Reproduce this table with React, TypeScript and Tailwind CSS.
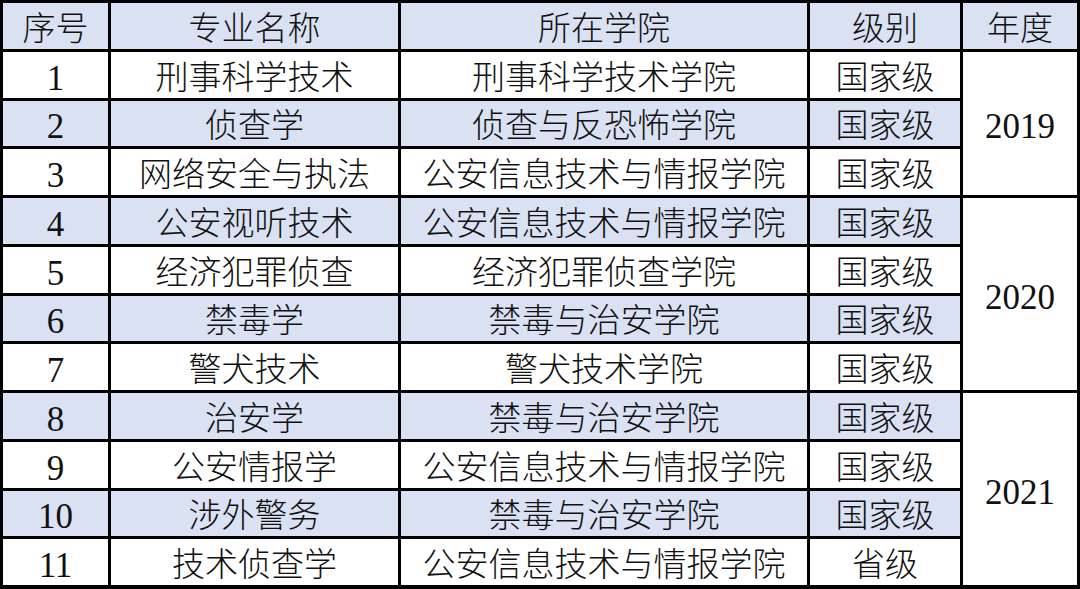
import React from "react";

type Row = { n: number; major: string; college: string; level: string };

const rows: Row[] = [
  { n: 1, major: "刑事科学技术", college: "刑事科学技术学院", level: "国家级" },
  { n: 2, major: "侦查学", college: "侦查与反恐怖学院", level: "国家级" },
  { n: 3, major: "网络安全与执法", college: "公安信息技术与情报学院", level: "国家级" },
  { n: 4, major: "公安视听技术", college: "公安信息技术与情报学院", level: "国家级" },
  { n: 5, major: "经济犯罪侦查", college: "经济犯罪侦查学院", level: "国家级" },
  { n: 6, major: "禁毒学", college: "禁毒与治安学院", level: "国家级" },
  { n: 7, major: "警犬技术", college: "警犬技术学院", level: "国家级" },
  { n: 8, major: "治安学", college: "禁毒与治安学院", level: "国家级" },
  { n: 9, major: "公安情报学", college: "公安信息技术与情报学院", level: "国家级" },
  { n: 10, major: "涉外警务", college: "禁毒与治安学院", level: "国家级" },
  { n: 11, major: "技术侦查学", college: "公安信息技术与情报学院", level: "省级" },
];

const years: Record<number, { year: string; span: string }> = {
  1: { year: "2019", span: "row-span-3" },
  4: { year: "2020", span: "row-span-4" },
  8: { year: "2021", span: "row-span-4" },
};

const font = {
  fontFamily: '"Liberation Serif", "Noto Sans CJK SC", serif',
};

function Cell({ children, blue, className = "" }: { children: React.ReactNode; blue?: boolean; className?: string }) {
  return (
    <div
      className={`flex items-center justify-center pt-[7px] text-[33px] font-light leading-none text-[#111] whitespace-nowrap ${
        blue ? "bg-[#d9e1f2]" : "bg-white"
      } ${className}`}
    >
      {children}
    </div>
  );
}

function Num({ children }: { children: React.ReactNode }) {
  return <span className="text-[35px] font-normal">{children}</span>;
}

export default function App() {
  return (
    <div
      style={font}
      className="w-[1080px] h-[589px] bg-black pt-[3px] pb-[4px] px-[3px] grid grid-cols-[105px_287px_406px_150px_114px] grid-rows-[repeat(12,minmax(0,1fr))] gap-[3px] overflow-hidden"
    >
      <Cell blue>序号</Cell>
      <Cell blue>专业名称</Cell>
      <Cell blue>所在学院</Cell>
      <Cell blue>级别</Cell>
      <Cell blue>年度</Cell>
      {rows.map((r) => {
        const blue = r.n % 2 === 0;
        const y = years[r.n];
        return (
          <React.Fragment key={r.n}>
            <Cell blue={blue}>
              <Num>{r.n}</Num>
            </Cell>
            <Cell blue={blue}>{r.major}</Cell>
            <Cell blue={blue}>{r.college}</Cell>
            <Cell blue={blue}>{r.level}</Cell>
            {y && (
              <Cell className={y.span}>
                <Num>{y.year}</Num>
              </Cell>
            )}
          </React.Fragment>
        );
      })}
    </div>
  );
}
